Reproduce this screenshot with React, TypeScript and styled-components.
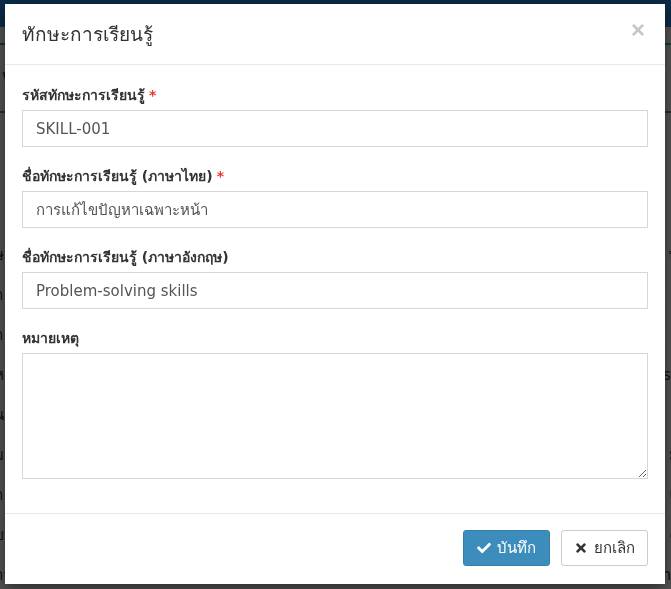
import * as React from 'react';
import styled, { createGlobalStyle } from 'styled-components';
import { FaCheck, FaTimes } from 'react-icons/fa';

const GlobalStyle = createGlobalStyle`
  * {
    box-sizing: border-box;
  }

  html,
  body {
    margin: 0;
    padding: 0;
  }

  body {
    width: 671px;
    height: 589px;
    overflow: hidden;
    background-color: #ffffff;
    color: #333333;
    font-family: Tahoma, 'DejaVu Sans', 'Noto Sans', sans-serif;
    font-size: 14px;
  }
`;

/* page behind the modal */

const Page = styled.div`
  width: 671px;
  height: 589px;
  overflow: hidden;
`;

const Navbar = styled.div`
  height: 27px;
  background-color: #2383d6;
`;

const TabBar = styled.div`
  height: 18px;
  border-bottom: 2px solid #3aa5b5;
`;

const SectionTitle = styled.div`
  height: 68px;
  padding: 20px 0 0 2px;
  font-size: 18px;
  border-bottom: 2px solid #3aa5b5;
`;

const Table = styled.div`
  display: flex;
  flex-direction: column;
  padding-top: 122px;
`;

const TableRow = styled.div`
  height: 40px;
  display: flex;
  align-items: center;
  justify-content: space-between;
  font-size: 15px;
  white-space: nowrap;
`;

const Cell = styled.span<{ $align?: 'left' | 'right' }>`
  display: block;
  margin: ${({ $align }) => ($align === 'right' ? '0 -8px 0 0' : '0 0 0 -6px')};
`;

/* modal */

const Overlay = styled.div`
  position: fixed;
  inset: 0;
  background-color: rgba(0, 0, 0, 0.67);

  display: flex;
  justify-content: center;
  align-items: flex-start;
`;

const Dialog = styled.div`
  width: 660px;
  margin-top: 4px;
  margin-left: -1px;
  background-color: #ffffff;
  box-shadow: 0 5px 15px rgba(0, 0, 0, 0.5);
`;

const Header = styled.div`
  height: 61px;
  padding: 0 20px 0 17px;
  border-bottom: 1px solid #e9e9e9;

  display: flex;
  align-items: center;
  justify-content: space-between;
`;

const Title = styled.h4`
  margin: 0;
  font-size: 19px;
  font-weight: normal;
  color: #333333;
`;

const Close = styled.button`
  border: 0;
  padding: 0;
  background: transparent;
  color: #c6c6c6;
  font-family: 'Liberation Sans', Arial, sans-serif;
  font-size: 24px;
  font-weight: bold;
  line-height: 1;
  margin-top: -8px;
`;

const Body = styled.div`
  padding: 20px 17px 15px;
`;

const FormGroup = styled.div`
  margin-bottom: 19px;
`;

const Label = styled.label`
  display: block;
  margin-bottom: 5px;
  line-height: 20px;
  font-weight: bold;
  font-size: 14px;
  color: #333333;
`;

const Required = styled.span`
  color: #e8372b;
  margin-left: 4px;
`;

const Input = styled.input`
  display: block;
  width: 100%;
  height: 37px;
  padding: 6px 13px;
  border: 1px solid #d6d6d6;
  border-radius: 0;
  font-family: inherit;
  font-size: 15px;
  color: #555555;
  outline: none;
`;

const TextArea = styled.textarea`
  display: block;
  width: 100%;
  height: 126px;
  padding: 6px 13px;
  border: 1px solid #d6d6d6;
  border-radius: 0;
  font-family: inherit;
  font-size: 15px;
  color: #555555;
  outline: none;
`;

const Footer = styled.div`
  padding: 16px 17px 18px;
  border-top: 1px solid #e9e9e9;

  display: flex;
  justify-content: flex-end;
  gap: 11px;
`;

const Button = styled.button<{ $primary?: boolean }>`
  width: 87px;
  height: 36px;
  border-radius: 3px;
  border: 1px solid ${({ $primary }) => ($primary ? '#367fa9' : '#cccccc')};
  background-color: ${({ $primary }) => ($primary ? '#3c8dbc' : '#ffffff')};
  color: ${({ $primary }) => ($primary ? '#ffffff' : '#333333')};
  font-family: inherit;
  font-size: 15px;

  display: flex;
  align-items: center;
  justify-content: center;
  gap: 6px;

  svg {
    width: 14px;
    height: 14px;
  }
`;

const rows: [string, string][] = [
  ['ษ', 'ษ'],
  ['ก', 'ก'],
  ['ก', 'ก'],
  ['ห', 'sc'],
  ['น', 'c'],
  ['ม', 'ม'],
  ['ก', 'u'],
  ['ข', 'e'],
];

const App: React.FC = () => {
  return (
    <>
      <GlobalStyle />
      <Page>
        <Navbar />
        <TabBar />
        <SectionTitle>w</SectionTitle>
        <Table>
          {rows.map(([left, right], i) => (
            <TableRow key={i}>
              <Cell>{left}</Cell>
              <Cell $align="right">{right}</Cell>
            </TableRow>
          ))}
          <TableRow>
            <Cell>การประเมินผลระดับหลักสูตร</Cell>
            <Cell $align="right">Use of additional systems</Cell>
          </TableRow>
        </Table>
      </Page>

      <Overlay>
        <Dialog>
          <Header>
            <Title>ทักษะการเรียนรู้</Title>
            <Close type="button" aria-label="close">
              ×
            </Close>
          </Header>

          <Body>
            <FormGroup>
              <Label>
                รหัสทักษะการเรียนรู้<Required>*</Required>
              </Label>
              <Input defaultValue="SKILL-001" />
            </FormGroup>

            <FormGroup>
              <Label>
                ชื่อทักษะการเรียนรู้ (ภาษาไทย)<Required>*</Required>
              </Label>
              <Input defaultValue="การแก้ไขปัญหาเฉพาะหน้า" />
            </FormGroup>

            <FormGroup>
              <Label>ชื่อทักษะการเรียนรู้ (ภาษาอังกฤษ)</Label>
              <Input defaultValue="Problem-solving skills" />
            </FormGroup>

            <FormGroup>
              <Label>หมายเหตุ</Label>
              <TextArea />
            </FormGroup>
          </Body>

          <Footer>
            <Button type="button" $primary>
              <FaCheck />
              บันทึก
            </Button>
            <Button type="button">
              <FaTimes />
              ยกเลิก
            </Button>
          </Footer>
        </Dialog>
      </Overlay>
    </>
  );
};

export default App;
